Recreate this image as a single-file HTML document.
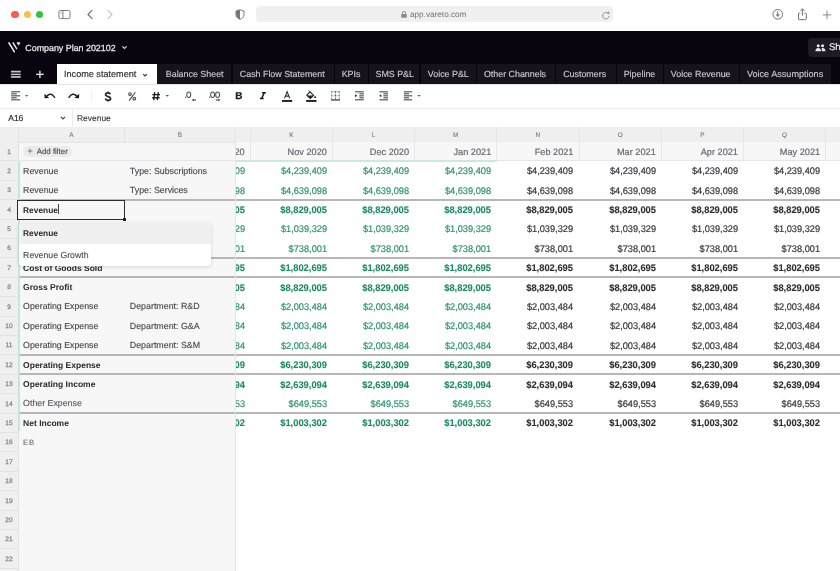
<!DOCTYPE html>
<html><head><meta charset="utf-8"><style>
html,body{margin:0;padding:0;width:840px;height:571px;overflow:hidden;background:#fff;}
body{position:relative;font-family:"Liberation Sans", sans-serif;}
#w{position:absolute;left:0;top:0;width:840px;height:571px;will-change:transform;text-rendering:geometricPrecision;}
.r{position:absolute;}
.t{position:absolute;white-space:nowrap;font-family:"Liberation Sans", sans-serif;}
</style></head><body><div id="w">
<div class="r" style="left:0.00px;top:0.00px;width:840.00px;height:30.50px;background:#fff;"></div>
<div class="r" style="left:11.30px;top:10.70px;width:7.40px;height:7.40px;background:#f95c57;border-radius:50%;"></div>
<div class="r" style="left:23.50px;top:10.70px;width:7.40px;height:7.40px;background:#f5c343;border-radius:50%;"></div>
<div class="r" style="left:35.60px;top:10.70px;width:7.40px;height:7.40px;background:#2bc842;border-radius:50%;"></div>
<svg class="r" style="left:57px;top:9px" width="15" height="11" viewBox="0 0 15 11"><rect x="1.9" y="1.5" width="11.1" height="8.1" rx="1.4" fill="none" stroke="#7e7e7e" stroke-width="1"/><line x1="5.9" y1="1.5" x2="5.9" y2="9.6" stroke="#7e7e7e" stroke-width="1"/><line x1="3.2" y1="3" x2="4.6" y2="3" stroke="#9a9a9a" stroke-width="0.6"/><line x1="3.2" y1="4.4" x2="4.6" y2="4.4" stroke="#9a9a9a" stroke-width="0.6"/></svg>
<svg class="r" style="left:85px;top:9px" width="10" height="11" viewBox="0 0 10 11"><polyline points="7,1.3 3,5.5 7,9.7" fill="none" stroke="#6e6e6e" stroke-width="1.1" stroke-linecap="round" stroke-linejoin="round"/></svg>
<svg class="r" style="left:105px;top:9px" width="10" height="11" viewBox="0 0 10 11"><polyline points="3,1.3 7,5.5 3,9.7" fill="none" stroke="#c4c4c4" stroke-width="1.1" stroke-linecap="round" stroke-linejoin="round"/></svg>
<svg class="r" style="left:235px;top:9px" width="10" height="11" viewBox="0 0 10 11"><path d="M5 0.8 L9 2 L9 5.6 C9 8 7 9.6 5 10.3 C3 9.6 1 8 1 5.6 L1 2 Z" fill="none" stroke="#777" stroke-width="1"/><path d="M5 0.8 L1 2 L1 5.6 C1 8 3 9.6 5 10.3 Z" fill="#777"/></svg>
<div class="r" style="left:255.70px;top:6.00px;width:357.00px;height:16.40px;background:#f0f0f1;border-radius:4px;"></div>
<svg class="r" style="left:401px;top:11px" width="6" height="7" viewBox="0 0 6 7"><rect x="0.3" y="3" width="5.4" height="3.8" rx="0.6" fill="#8a8a8a"/><path d="M1.4 3 V2 A1.6 1.6 0 0 1 4.6 2 V3" fill="none" stroke="#8a8a8a" stroke-width="0.9"/></svg>
<div class="t" style="left:410.00px;top:11.36px;font-size:8.2px;line-height:8.2px;color:#707070;font-weight:400;">app.vareto.com</div>
<svg class="r" style="left:601px;top:10.5px" width="10" height="9" viewBox="0 0 10 9"><path d="M7.6 3.2 A3.2 3.2 0 1 0 8 5" fill="none" stroke="#8a8a8a" stroke-width="0.9"/><path d="M6 1.2 L8.2 3.3 L8.4 0.6 Z" fill="#8a8a8a"/></svg>
<svg class="r" style="left:772px;top:9px" width="12" height="12" viewBox="0 0 12 12"><circle cx="5.8" cy="5.3" r="4.8" fill="none" stroke="#747474" stroke-width="1"/><line x1="5.8" y1="2.5" x2="5.8" y2="6.4" stroke="#747474" stroke-width="1"/><path d="M3.7 5.4 L7.9 5.4 L5.8 7.9 Z" fill="#747474"/></svg>
<svg class="r" style="left:797px;top:8px" width="11" height="13" viewBox="0 0 11 13"><path d="M3.4 5.2 H2.2 Q1.5 5.2 1.5 5.9 V11 Q1.5 11.7 2.2 11.7 H8.6 Q9.3 11.7 9.3 11 V5.9 Q9.3 5.2 8.6 5.2 H7.4" fill="none" stroke="#747474" stroke-width="1"/><line x1="5.4" y1="1.2" x2="5.4" y2="7.8" stroke="#747474" stroke-width="1"/><path d="M3.4 2.9 L5.4 0.7 L7.4 2.9" fill="none" stroke="#747474" stroke-width="1"/></svg>
<svg class="r" style="left:822px;top:9.5px" width="10" height="10" viewBox="0 0 10 10"><line x1="5" y1="0.6" x2="5" y2="9.2" stroke="#7a7a7a" stroke-width="0.9"/><line x1="0.8" y1="4.9" x2="9.2" y2="4.9" stroke="#7a7a7a" stroke-width="0.9"/></svg>
<div class="r" style="left:0.00px;top:30.80px;width:840.00px;height:53.00px;background:#09040d;"></div>
<svg class="r" style="left:4px;top:38px" width="20" height="16" viewBox="0 0 20 16"><line x1="4.9" y1="4.9" x2="10.3" y2="13.7" stroke="#ececec" stroke-width="1.6" stroke-linecap="round"/><line x1="9.2" y1="4.9" x2="12.6" y2="10.7" stroke="#e4e4e4" stroke-width="1.5" stroke-linecap="round"/><path d="M13 4.5 L16.1 4.8 L14.5 7.2 Z" fill="#e8e8e8" stroke="#e8e8e8" stroke-width="0.7" stroke-linejoin="round"/></svg>
<div class="t" style="left:25.30px;top:43.67px;font-size:8.9px;line-height:8.9px;color:#ebe9ed;font-weight:400;-webkit-text-stroke:0.25px #ebe9ed;">Company Plan 202102</div>
<svg class="r" style="left:121px;top:45px" width="7" height="5" viewBox="0 0 7 5"><polyline points="1.4,1.3 3.5,3.4 5.6,1.3" fill="none" stroke="#d8d8da" stroke-width="1.2"/></svg>
<div class="r" style="left:808.20px;top:37.90px;width:40.00px;height:19.20px;background:#1f1b24;border-radius:4px;"></div>
<svg class="r" style="left:815px;top:44px" width="11" height="8" viewBox="0 0 11 8"><circle cx="3.2" cy="1.7" r="1.5" fill="#e8e8e8"/><circle cx="7.6" cy="1.7" r="1.5" fill="#e8e8e8"/><path d="M0.4 7.2 C0.4 4.8 1.6 4 3.2 4 C4.8 4 6 4.8 6 7.2 Z" fill="#e8e8e8"/><path d="M6.6 4.2 C7 4 7.3 4 7.6 4 C9.2 4 10.4 4.8 10.4 7.2 L6.8 7.2 C6.8 6 6.8 5 6.6 4.2 Z" fill="#e8e8e8"/></svg>
<div class="t" style="left:828.90px;top:43.17px;font-size:9.6px;line-height:9.6px;color:#e8e8e8;font-weight:400;-webkit-text-stroke:0.2px #e8e8e8;">Sh</div>
<svg class="r" style="left:10px;top:70px" width="12" height="9" viewBox="0 0 12 9"><rect x="1" y="0.75" width="9.7" height="1.7" fill="#c4c4c6"/><rect x="1" y="3.65" width="9.7" height="1.5" fill="#c4c4c6"/><rect x="1" y="6.1" width="9.7" height="1.7" fill="#c4c4c6"/></svg>
<svg class="r" style="left:35px;top:70px" width="10" height="10" viewBox="0 0 10 10"><rect x="4.2" y="0.7" width="1.4" height="7.3" fill="#dcdcde"/><rect x="1.1" y="3.65" width="7.6" height="1.4" fill="#dcdcde"/></svg>
<div class="r" style="left:56.50px;top:64.20px;width:100.80px;height:20.00px;background:#fff;"></div>
<div class="t" style="left:64.00px;top:69.60px;font-size:9.1px;line-height:9.1px;color:#333;font-weight:400;-webkit-text-stroke:0.2px #333;">Income statement</div>
<svg class="r" style="left:142px;top:72.5px" width="6" height="4" viewBox="0 0 6 4"><polyline points="1.2,1.1 3.1,2.9 5,1.1" fill="none" stroke="#3a3a3a" stroke-width="1.2"/></svg>
<div class="r" style="left:157.30px;top:64.20px;width:74.20px;height:19.50px;background:#17121b;"></div>
<div class="t" style="left:165.80px;top:69.97px;font-size:8.9px;line-height:8.9px;color:#c9c6cc;font-weight:400;-webkit-text-stroke:0.15px #c9c6cc;">Balance Sheet</div>
<div class="r" style="left:232.50px;top:64.20px;width:101.50px;height:19.50px;background:#17121b;"></div>
<div class="t" style="left:239.80px;top:69.97px;font-size:8.9px;line-height:8.9px;color:#c9c6cc;font-weight:400;-webkit-text-stroke:0.15px #c9c6cc;">Cash Flow Statement</div>
<div class="r" style="left:335.00px;top:64.20px;width:32.90px;height:19.50px;background:#17121b;"></div>
<div class="t" style="left:341.70px;top:69.97px;font-size:8.9px;line-height:8.9px;color:#c9c6cc;font-weight:400;-webkit-text-stroke:0.15px #c9c6cc;">KPIs</div>
<div class="r" style="left:368.90px;top:64.20px;width:50.60px;height:19.50px;background:#17121b;"></div>
<div class="t" style="left:375.50px;top:69.97px;font-size:8.9px;line-height:8.9px;color:#c9c6cc;font-weight:400;-webkit-text-stroke:0.15px #c9c6cc;">SMS P&amp;L</div>
<div class="r" style="left:420.50px;top:64.20px;width:55.00px;height:19.50px;background:#17121b;"></div>
<div class="t" style="left:427.80px;top:69.97px;font-size:8.9px;line-height:8.9px;color:#c9c6cc;font-weight:400;-webkit-text-stroke:0.15px #c9c6cc;">Voice P&amp;L</div>
<div class="r" style="left:476.50px;top:64.20px;width:78.90px;height:19.50px;background:#17121b;"></div>
<div class="t" style="left:483.90px;top:69.97px;font-size:8.9px;line-height:8.9px;color:#c9c6cc;font-weight:400;-webkit-text-stroke:0.15px #c9c6cc;">Other Channels</div>
<div class="r" style="left:556.40px;top:64.20px;width:59.20px;height:19.50px;background:#17121b;"></div>
<div class="t" style="left:563.20px;top:69.97px;font-size:8.9px;line-height:8.9px;color:#c9c6cc;font-weight:400;-webkit-text-stroke:0.15px #c9c6cc;">Customers</div>
<div class="r" style="left:616.60px;top:64.20px;width:46.20px;height:19.50px;background:#17121b;"></div>
<div class="t" style="left:623.70px;top:69.97px;font-size:8.9px;line-height:8.9px;color:#c9c6cc;font-weight:400;-webkit-text-stroke:0.15px #c9c6cc;">Pipeline</div>
<div class="r" style="left:663.80px;top:64.20px;width:74.90px;height:19.50px;background:#17121b;"></div>
<div class="t" style="left:670.80px;top:69.97px;font-size:8.9px;line-height:8.9px;color:#c9c6cc;font-weight:400;-webkit-text-stroke:0.15px #c9c6cc;">Voice Revenue</div>
<div class="r" style="left:739.70px;top:64.20px;width:91.50px;height:19.50px;background:#17121b;"></div>
<div class="t" style="left:746.90px;top:69.80px;font-size:9.1px;line-height:9.1px;color:#c9c6cc;font-weight:400;-webkit-text-stroke:0.15px #c9c6cc;">Voice Assumptions</div>
<div class="r" style="left:0.00px;top:83.70px;width:840.00px;height:24.50px;background:#fff;"></div>
<div class="r" style="left:0.00px;top:83.80px;width:840.00px;height:0.90px;background:#e6e6e8;"></div>
<div class="r" style="left:0.00px;top:108.00px;width:840.00px;height:0.80px;background:#ebebeb;"></div>
<svg class="r" style="left:0;top:84px" width="430" height="24" viewBox="0 84 430 24">
<g fill="#7a7a7c">
<rect x="11.1" y="91" width="9.1" height="1.5"/><rect x="11.1" y="93" width="5.6" height="1.5"/><rect x="11.1" y="95" width="9.1" height="1.5"/><rect x="11.1" y="97" width="5.6" height="1.5"/><rect x="11.1" y="99" width="9.1" height="1.5"/>
</g>
<path d="M25 95 L28.2 95 L26.6 96.8 Z" fill="#555"/>
<!-- undo -->
<path d="M46.8 96 Q51 91.9 54.6 97.4" fill="none" stroke="#222" stroke-width="1.45" stroke-linecap="round"/>
<path d="M44.4 93.7 L44.6 98.3 L49.2 97.9 Z" fill="#1a1a1a"/>
<!-- redo -->
<path d="M76.8 96 Q72.6 91.9 69 97.4" fill="none" stroke="#222" stroke-width="1.45" stroke-linecap="round"/>
<path d="M79.2 93.7 L79 98.3 L74.4 97.9 Z" fill="#1a1a1a"/>
<!-- separator -->
<rect x="91.2" y="90.6" width="0.7" height="10.4" fill="#e6e6e6"/>
<!-- $ % # -->
<path d="M110.3 94.3 C110 93.2 109.2 92.8 108 92.8 C106.5 92.8 105.6 93.6 105.6 94.6 C105.6 97.3 110.6 95.9 110.6 98.5 C110.6 99.6 109.6 100.3 108 100.3 C106.6 100.3 105.6 99.7 105.3 98.6" fill="none" stroke="#262626" stroke-width="1.75"/>
<path d="M108 91.4 L108 93 M108 100 L108 101.5" stroke="#262626" stroke-width="1.4"/>
<circle cx="130" cy="94" r="1.35" fill="none" stroke="#444" stroke-width="1.05"/>
<circle cx="134.3" cy="98.7" r="1.35" fill="none" stroke="#444" stroke-width="1.05"/>
<path d="M135.3 92.2 L129.1 100.6" stroke="#444" stroke-width="1.05"/>
<path d="M154.7 92.1 L153.7 100.2 M158.3 92.1 L157.3 100.2 M152.4 94.6 L160 94.6 M152.2 97.7 L159.6 97.7" stroke="#1e1e1e" stroke-width="1.35"/>
<path d="M165.6 95 L169 95 L167.3 96.8 Z" fill="#555"/>
<!-- .0 <- -->
<rect x="184.9" y="96.6" width="1" height="1.2" fill="#555"/>
<ellipse cx="188.75" cy="94.65" rx="1.95" ry="2.75" fill="none" stroke="#505050" stroke-width="1.05"/>
<path d="M193.6 100 L196 100" stroke="#444" stroke-width="1.1"/><path d="M191.6 100 L193.8 98.7 L193.8 101.3 Z" fill="#333"/>
<!-- .00 -> -->
<rect x="209" y="96.6" width="1" height="1.2" fill="#555"/>
<ellipse cx="212.6" cy="94.65" rx="1.95" ry="2.75" fill="none" stroke="#505050" stroke-width="1.05"/>
<ellipse cx="217.6" cy="94.65" rx="1.95" ry="2.75" fill="none" stroke="#505050" stroke-width="1.05"/>
<path d="M215.8 100 L218.2 100" stroke="#444" stroke-width="1.1"/><path d="M220.4 100 L218.2 98.7 L218.2 101.3 Z" fill="#333"/>
<!-- B -->
<text x="238.9" y="99.2" font-family="Liberation Sans" font-weight="700" font-size="10" fill="#1e1e1e" stroke="#1e1e1e" stroke-width="0.25" text-anchor="middle">B</text>
<!-- I -->
<path d="M262 92.7 L265.9 92.7 M259.9 98.6 L263.7 98.6 M264.2 92.7 L261.6 98.6" fill="none" stroke="#1e1e1e" stroke-width="1.5"/>
<!-- A underline -->
<path d="M284.5 98.4 L287.1 91.6 L289.7 98.4 M285.5 96.1 L288.7 96.1" fill="none" stroke="#222" stroke-width="1.05"/>
<rect x="282" y="100" width="10.2" height="1.9" fill="#1e1e1e"/>
<!-- bucket -->
<path d="M310 91.8 L313.6 95.4 L310.2 98.4 L306.8 95.2 Z" fill="none" stroke="#1e1e1e" stroke-width="1.1"/>
<path d="M307.2 95.4 L313.2 95.4 L310.2 98.2 Z" fill="#1e1e1e"/>
<path d="M308.4 90.2 L310.4 92.2" stroke="#333" stroke-width="0.8"/>
<circle cx="315.1" cy="97.3" r="1" fill="#1e1e1e"/>
<rect x="306.1" y="100" width="10.4" height="1.9" fill="#1e1e1e"/>
<!-- borders -->
<g stroke="#9a9a9c" stroke-width="1.1" stroke-dasharray="2.3 0.9" fill="none">
<path d="M331 91.6 L340 91.6"/><path d="M331.6 91 L331.6 99.2"/><path d="M339.4 91 L339.4 99.2"/><path d="M331 95.8 L340 95.8"/>
</g>
<path d="M335.5 91 L335.5 99.2" stroke="#707072" stroke-width="1.1" stroke-dasharray="2.3 0.9"/>
<rect x="331" y="99.1" width="9" height="1.7" fill="#6e6e70"/>
<!-- indent -->
<g fill="#7a7a7c">
<rect x="355" y="91" width="8.8" height="1.5"/><rect x="359.4" y="93" width="4.4" height="1.5"/><rect x="359.4" y="95" width="4.4" height="1.5"/><rect x="359.4" y="97" width="4.4" height="1.5"/><rect x="355" y="99" width="8.8" height="1.5"/>
</g>
<path d="M355 94.3 L357.2 95.8 L355 97.3 Z" fill="#2a2a2a"/>
<!-- outdent -->
<g fill="#7a7a7c">
<rect x="379.4" y="91" width="8.6" height="1.5"/><rect x="383.4" y="93" width="4.6" height="1.5"/><rect x="383.4" y="95" width="4.6" height="1.5"/><rect x="383.4" y="97" width="4.6" height="1.5"/><rect x="379.4" y="99" width="8.6" height="1.5"/>
</g>
<path d="M381.4 94.3 L379.2 95.8 L381.4 97.3 Z" fill="#2a2a2a"/>
<!-- align -->
<g fill="#7a7a7c">
<rect x="403.8" y="91" width="8.3" height="1.5"/><rect x="403.8" y="93" width="5.3" height="1.5"/><rect x="403.8" y="95" width="8.3" height="1.5"/><rect x="403.8" y="97" width="5.3" height="1.5"/><rect x="403.8" y="99" width="8.3" height="1.5"/>
</g>
<path d="M417.4 95 L420.8 95 L419.1 96.8 Z" fill="#555"/>
</svg>

<div class="r" style="left:0.00px;top:108.80px;width:840.00px;height:18.20px;background:#fff;"></div>
<div class="t" style="left:8.30px;top:113.92px;font-size:8.6px;line-height:8.6px;color:#333;font-weight:400;-webkit-text-stroke:0.2px #333;letter-spacing:-0.1px;">A16</div>
<svg class="r" style="left:59.5px;top:116px" width="6" height="4" viewBox="0 0 6 4"><polyline points="0.9,0.9 3,2.9 5.1,0.9" fill="none" stroke="#444" stroke-width="1.15"/></svg>
<div class="r" style="left:71.60px;top:108.80px;width:0.80px;height:18.20px;background:#ececec;"></div>
<div class="t" style="left:77.00px;top:114.05px;font-size:8.45px;line-height:8.45px;color:#3d3d3f;font-weight:400;-webkit-text-stroke:0.15px #3d3d3f;">Revenue</div>
<div class="r" style="left:0.00px;top:127.00px;width:840.00px;height:444.00px;background:#fff;"></div>
<div class="r" style="left:18.00px;top:127.00px;width:217.20px;height:444.00px;background:#f7f7f7;"></div>
<div class="r" style="left:0.00px;top:127.00px;width:840.00px;height:15.30px;background:#efeff0;"></div>
<div class="r" style="left:0.00px;top:141.80px;width:840.00px;height:0.80px;background:#e3e3e5;"></div>
<div class="r" style="left:0.00px;top:127.00px;width:18.00px;height:444.00px;background:#efeff0;"></div>
<div class="r" style="left:17.80px;top:127.00px;width:0.80px;height:444.00px;background:#e2e2e4;"></div>
<div class="r" style="left:235.20px;top:142.30px;width:604.80px;height:18.40px;background:#f7f7f7;"></div>
<div class="r" style="left:18.00px;top:160.40px;width:822.00px;height:0.80px;background:#e6e6e8;"></div>
<div class="r" style="left:249.80px;top:127.00px;width:0.80px;height:33.70px;background:#e6e6e8;"></div>
<div class="r" style="left:332.00px;top:127.00px;width:0.80px;height:33.70px;background:#e6e6e8;"></div>
<div class="r" style="left:414.20px;top:127.00px;width:0.80px;height:33.70px;background:#e6e6e8;"></div>
<div class="r" style="left:496.40px;top:127.00px;width:0.80px;height:33.70px;background:#e6e6e8;"></div>
<div class="r" style="left:578.60px;top:127.00px;width:0.80px;height:33.70px;background:#e6e6e8;"></div>
<div class="r" style="left:660.90px;top:127.00px;width:0.80px;height:33.70px;background:#e6e6e8;"></div>
<div class="r" style="left:743.10px;top:127.00px;width:0.80px;height:33.70px;background:#e6e6e8;"></div>
<div class="r" style="left:825.30px;top:127.00px;width:0.80px;height:33.70px;background:#e6e6e8;"></div>
<div class="r" style="left:124.20px;top:127.00px;width:0.80px;height:15.30px;background:#e2e2e4;"></div>
<div class="r" style="left:235.20px;top:159.80px;width:261.60px;height:2.00px;background:#cbe9de;"></div>
<div class="t" style="left:-28.60px;width:200px;text-align:center;top:133.28px;font-size:6.4px;line-height:6.4px;color:#78787c;font-weight:400;-webkit-text-stroke:0.1px #78787c;">A</div>
<div class="t" style="left:80.00px;width:200px;text-align:center;top:133.28px;font-size:6.4px;line-height:6.4px;color:#78787c;font-weight:400;-webkit-text-stroke:0.1px #78787c;">B</div>
<div class="t" style="left:191.30px;width:200px;text-align:center;top:133.28px;font-size:6.4px;line-height:6.4px;color:#78787c;font-weight:400;-webkit-text-stroke:0.1px #78787c;">K</div>
<div class="t" style="left:273.50px;width:200px;text-align:center;top:133.28px;font-size:6.4px;line-height:6.4px;color:#78787c;font-weight:400;-webkit-text-stroke:0.1px #78787c;">L</div>
<div class="t" style="left:355.70px;width:200px;text-align:center;top:133.28px;font-size:6.4px;line-height:6.4px;color:#78787c;font-weight:400;-webkit-text-stroke:0.1px #78787c;">M</div>
<div class="t" style="left:437.90px;width:200px;text-align:center;top:133.28px;font-size:6.4px;line-height:6.4px;color:#78787c;font-weight:400;-webkit-text-stroke:0.1px #78787c;">N</div>
<div class="t" style="left:520.15px;width:200px;text-align:center;top:133.28px;font-size:6.4px;line-height:6.4px;color:#78787c;font-weight:400;-webkit-text-stroke:0.1px #78787c;">O</div>
<div class="t" style="left:602.40px;width:200px;text-align:center;top:133.28px;font-size:6.4px;line-height:6.4px;color:#78787c;font-weight:400;-webkit-text-stroke:0.1px #78787c;">P</div>
<div class="t" style="left:684.60px;width:200px;text-align:center;top:133.28px;font-size:6.4px;line-height:6.4px;color:#78787c;font-weight:400;-webkit-text-stroke:0.1px #78787c;">Q</div>
<div class="t" style="left:-91.00px;width:200px;text-align:center;top:149.81px;font-size:6.6px;line-height:6.6px;color:#848487;font-weight:400;-webkit-text-stroke:0.25px #848487;">1</div>
<div class="r" style="left:0.00px;top:160.30px;width:18.00px;height:0.80px;background:#e2e2e4;"></div>
<div class="t" style="left:-91.00px;width:200px;text-align:center;top:168.71px;font-size:6.6px;line-height:6.6px;color:#848487;font-weight:400;-webkit-text-stroke:0.25px #848487;">2</div>
<div class="r" style="left:0.00px;top:179.70px;width:18.00px;height:0.80px;background:#e2e2e4;"></div>
<div class="t" style="left:-91.00px;width:200px;text-align:center;top:188.11px;font-size:6.6px;line-height:6.6px;color:#848487;font-weight:400;-webkit-text-stroke:0.25px #848487;">3</div>
<div class="r" style="left:0.00px;top:199.10px;width:18.00px;height:0.80px;background:#e2e2e4;"></div>
<div class="t" style="left:-91.00px;width:200px;text-align:center;top:207.51px;font-size:6.6px;line-height:6.6px;color:#848487;font-weight:400;-webkit-text-stroke:0.25px #848487;">4</div>
<div class="r" style="left:0.00px;top:218.50px;width:18.00px;height:0.80px;background:#e2e2e4;"></div>
<div class="t" style="left:-91.00px;width:200px;text-align:center;top:226.91px;font-size:6.6px;line-height:6.6px;color:#848487;font-weight:400;-webkit-text-stroke:0.25px #848487;">5</div>
<div class="r" style="left:0.00px;top:237.90px;width:18.00px;height:0.80px;background:#e2e2e4;"></div>
<div class="t" style="left:-91.00px;width:200px;text-align:center;top:246.31px;font-size:6.6px;line-height:6.6px;color:#848487;font-weight:400;-webkit-text-stroke:0.25px #848487;">6</div>
<div class="r" style="left:0.00px;top:257.30px;width:18.00px;height:0.80px;background:#e2e2e4;"></div>
<div class="t" style="left:-91.00px;width:200px;text-align:center;top:265.71px;font-size:6.6px;line-height:6.6px;color:#848487;font-weight:400;-webkit-text-stroke:0.25px #848487;">7</div>
<div class="r" style="left:0.00px;top:276.70px;width:18.00px;height:0.80px;background:#e2e2e4;"></div>
<div class="t" style="left:-91.00px;width:200px;text-align:center;top:285.11px;font-size:6.6px;line-height:6.6px;color:#848487;font-weight:400;-webkit-text-stroke:0.25px #848487;">8</div>
<div class="r" style="left:0.00px;top:296.10px;width:18.00px;height:0.80px;background:#e2e2e4;"></div>
<div class="t" style="left:-91.00px;width:200px;text-align:center;top:304.51px;font-size:6.6px;line-height:6.6px;color:#848487;font-weight:400;-webkit-text-stroke:0.25px #848487;">9</div>
<div class="r" style="left:0.00px;top:315.50px;width:18.00px;height:0.80px;background:#e2e2e4;"></div>
<div class="t" style="left:-91.00px;width:200px;text-align:center;top:323.91px;font-size:6.6px;line-height:6.6px;color:#848487;font-weight:400;-webkit-text-stroke:0.25px #848487;">10</div>
<div class="r" style="left:0.00px;top:334.90px;width:18.00px;height:0.80px;background:#e2e2e4;"></div>
<div class="t" style="left:-91.00px;width:200px;text-align:center;top:343.31px;font-size:6.6px;line-height:6.6px;color:#848487;font-weight:400;-webkit-text-stroke:0.25px #848487;">11</div>
<div class="r" style="left:0.00px;top:354.30px;width:18.00px;height:0.80px;background:#e2e2e4;"></div>
<div class="t" style="left:-91.00px;width:200px;text-align:center;top:362.71px;font-size:6.6px;line-height:6.6px;color:#848487;font-weight:400;-webkit-text-stroke:0.25px #848487;">12</div>
<div class="r" style="left:0.00px;top:373.70px;width:18.00px;height:0.80px;background:#e2e2e4;"></div>
<div class="t" style="left:-91.00px;width:200px;text-align:center;top:382.11px;font-size:6.6px;line-height:6.6px;color:#848487;font-weight:400;-webkit-text-stroke:0.25px #848487;">13</div>
<div class="r" style="left:0.00px;top:393.10px;width:18.00px;height:0.80px;background:#e2e2e4;"></div>
<div class="t" style="left:-91.00px;width:200px;text-align:center;top:401.51px;font-size:6.6px;line-height:6.6px;color:#848487;font-weight:400;-webkit-text-stroke:0.25px #848487;">14</div>
<div class="r" style="left:0.00px;top:412.50px;width:18.00px;height:0.80px;background:#e2e2e4;"></div>
<div class="t" style="left:-91.00px;width:200px;text-align:center;top:420.91px;font-size:6.6px;line-height:6.6px;color:#848487;font-weight:400;-webkit-text-stroke:0.25px #848487;">15</div>
<div class="r" style="left:0.00px;top:431.90px;width:18.00px;height:0.80px;background:#e2e2e4;"></div>
<div class="t" style="left:-91.00px;width:200px;text-align:center;top:440.31px;font-size:6.6px;line-height:6.6px;color:#848487;font-weight:400;-webkit-text-stroke:0.25px #848487;">16</div>
<div class="r" style="left:0.00px;top:451.30px;width:18.00px;height:0.80px;background:#e2e2e4;"></div>
<div class="t" style="left:-91.00px;width:200px;text-align:center;top:459.71px;font-size:6.6px;line-height:6.6px;color:#848487;font-weight:400;-webkit-text-stroke:0.25px #848487;">17</div>
<div class="r" style="left:0.00px;top:470.70px;width:18.00px;height:0.80px;background:#e2e2e4;"></div>
<div class="t" style="left:-91.00px;width:200px;text-align:center;top:479.11px;font-size:6.6px;line-height:6.6px;color:#848487;font-weight:400;-webkit-text-stroke:0.25px #848487;">18</div>
<div class="r" style="left:0.00px;top:490.10px;width:18.00px;height:0.80px;background:#e2e2e4;"></div>
<div class="t" style="left:-91.00px;width:200px;text-align:center;top:498.51px;font-size:6.6px;line-height:6.6px;color:#848487;font-weight:400;-webkit-text-stroke:0.25px #848487;">19</div>
<div class="r" style="left:0.00px;top:509.50px;width:18.00px;height:0.80px;background:#e2e2e4;"></div>
<div class="t" style="left:-91.00px;width:200px;text-align:center;top:517.91px;font-size:6.6px;line-height:6.6px;color:#848487;font-weight:400;-webkit-text-stroke:0.25px #848487;">20</div>
<div class="r" style="left:0.00px;top:528.90px;width:18.00px;height:0.80px;background:#e2e2e4;"></div>
<div class="t" style="left:-91.00px;width:200px;text-align:center;top:537.31px;font-size:6.6px;line-height:6.6px;color:#848487;font-weight:400;-webkit-text-stroke:0.25px #848487;">21</div>
<div class="r" style="left:0.00px;top:548.30px;width:18.00px;height:0.80px;background:#e2e2e4;"></div>
<div class="t" style="left:-91.00px;width:200px;text-align:center;top:556.71px;font-size:6.6px;line-height:6.6px;color:#848487;font-weight:400;-webkit-text-stroke:0.25px #848487;">22</div>
<div class="r" style="left:0.00px;top:567.70px;width:18.00px;height:0.80px;background:#e2e2e4;"></div>
<div class="r" style="left:235.2px;top:142.3px;width:604.8px;height:18.4px;overflow:hidden;">
<div class="t" style="right:595.30px;top:6.01px;font-size:9.2px;line-height:9.2px;color:#6a686d;font-weight:400;-webkit-text-stroke:0.2px #6a686d;">Oct 2020</div>
<div class="t" style="right:513.10px;top:6.01px;font-size:9.2px;line-height:9.2px;color:#6a686d;font-weight:400;-webkit-text-stroke:0.2px #6a686d;">Nov 2020</div>
<div class="t" style="right:430.90px;top:6.01px;font-size:9.2px;line-height:9.2px;color:#6a686d;font-weight:400;-webkit-text-stroke:0.2px #6a686d;">Dec 2020</div>
<div class="t" style="right:348.70px;top:6.01px;font-size:9.2px;line-height:9.2px;color:#6a686d;font-weight:400;-webkit-text-stroke:0.2px #6a686d;">Jan 2021</div>
<div class="t" style="right:266.50px;top:6.01px;font-size:9.2px;line-height:9.2px;color:#6a686d;font-weight:400;-webkit-text-stroke:0.2px #6a686d;">Feb 2021</div>
<div class="t" style="right:184.20px;top:6.01px;font-size:9.2px;line-height:9.2px;color:#6a686d;font-weight:400;-webkit-text-stroke:0.2px #6a686d;">Mar 2021</div>
<div class="t" style="right:102.00px;top:6.01px;font-size:9.2px;line-height:9.2px;color:#6a686d;font-weight:400;-webkit-text-stroke:0.2px #6a686d;">Apr 2021</div>
<div class="t" style="right:19.80px;top:6.01px;font-size:9.2px;line-height:9.2px;color:#6a686d;font-weight:400;-webkit-text-stroke:0.2px #6a686d;">May 2021</div>
</div>
<div class="r" style="left:22.90px;top:146.00px;width:49.50px;height:11.40px;background:#ebebec;border-radius:6px;"></div>
<svg class="r" style="left:26.5px;top:148.3px" width="6" height="6" viewBox="0 0 6 6"><rect x="2.68" y="0.6" width="0.64" height="4.8" fill="#555"/><rect x="0.6" y="2.68" width="4.8" height="0.64" fill="#555"/></svg>
<div class="t" style="left:36.70px;top:147.51px;font-size:7.9px;line-height:7.9px;color:#505052;font-weight:400;-webkit-text-stroke:0.15px #505052;">Add filter</div>
<div class="r" style="left:235.2px;top:160.7px;width:604.8px;height:410.3px;overflow:hidden;">
<div class="t" style="right:595.30px;top:6.57px;font-size:9.6px;line-height:9.6px;color:#2f9573;font-weight:400;transform:scaleX(0.96);transform-origin:100% 50%;-webkit-text-stroke:0.22px #2f9573;">$4,239,409</div>
<div class="t" style="right:513.10px;top:6.57px;font-size:9.6px;line-height:9.6px;color:#2f9573;font-weight:400;transform:scaleX(0.96);transform-origin:100% 50%;-webkit-text-stroke:0.22px #2f9573;">$4,239,409</div>
<div class="t" style="right:430.90px;top:6.57px;font-size:9.6px;line-height:9.6px;color:#2f9573;font-weight:400;transform:scaleX(0.96);transform-origin:100% 50%;-webkit-text-stroke:0.22px #2f9573;">$4,239,409</div>
<div class="t" style="right:348.70px;top:6.57px;font-size:9.6px;line-height:9.6px;color:#2f9573;font-weight:400;transform:scaleX(0.96);transform-origin:100% 50%;-webkit-text-stroke:0.22px #2f9573;">$4,239,409</div>
<div class="t" style="right:266.50px;top:6.57px;font-size:9.6px;line-height:9.6px;color:#3a3a3d;font-weight:400;transform:scaleX(0.96);transform-origin:100% 50%;-webkit-text-stroke:0.22px #3a3a3d;">$4,239,409</div>
<div class="t" style="right:184.20px;top:6.57px;font-size:9.6px;line-height:9.6px;color:#3a3a3d;font-weight:400;transform:scaleX(0.96);transform-origin:100% 50%;-webkit-text-stroke:0.22px #3a3a3d;">$4,239,409</div>
<div class="t" style="right:102.00px;top:6.57px;font-size:9.6px;line-height:9.6px;color:#3a3a3d;font-weight:400;transform:scaleX(0.96);transform-origin:100% 50%;-webkit-text-stroke:0.22px #3a3a3d;">$4,239,409</div>
<div class="t" style="right:19.80px;top:6.57px;font-size:9.6px;line-height:9.6px;color:#3a3a3d;font-weight:400;transform:scaleX(0.96);transform-origin:100% 50%;-webkit-text-stroke:0.22px #3a3a3d;">$4,239,409</div>
<div class="t" style="right:595.30px;top:25.97px;font-size:9.6px;line-height:9.6px;color:#2f9573;font-weight:400;transform:scaleX(0.96);transform-origin:100% 50%;-webkit-text-stroke:0.22px #2f9573;">$4,639,098</div>
<div class="t" style="right:513.10px;top:25.97px;font-size:9.6px;line-height:9.6px;color:#2f9573;font-weight:400;transform:scaleX(0.96);transform-origin:100% 50%;-webkit-text-stroke:0.22px #2f9573;">$4,639,098</div>
<div class="t" style="right:430.90px;top:25.97px;font-size:9.6px;line-height:9.6px;color:#2f9573;font-weight:400;transform:scaleX(0.96);transform-origin:100% 50%;-webkit-text-stroke:0.22px #2f9573;">$4,639,098</div>
<div class="t" style="right:348.70px;top:25.97px;font-size:9.6px;line-height:9.6px;color:#2f9573;font-weight:400;transform:scaleX(0.96);transform-origin:100% 50%;-webkit-text-stroke:0.22px #2f9573;">$4,639,098</div>
<div class="t" style="right:266.50px;top:25.97px;font-size:9.6px;line-height:9.6px;color:#3a3a3d;font-weight:400;transform:scaleX(0.96);transform-origin:100% 50%;-webkit-text-stroke:0.22px #3a3a3d;">$4,639,098</div>
<div class="t" style="right:184.20px;top:25.97px;font-size:9.6px;line-height:9.6px;color:#3a3a3d;font-weight:400;transform:scaleX(0.96);transform-origin:100% 50%;-webkit-text-stroke:0.22px #3a3a3d;">$4,639,098</div>
<div class="t" style="right:102.00px;top:25.97px;font-size:9.6px;line-height:9.6px;color:#3a3a3d;font-weight:400;transform:scaleX(0.96);transform-origin:100% 50%;-webkit-text-stroke:0.22px #3a3a3d;">$4,639,098</div>
<div class="t" style="right:19.80px;top:25.97px;font-size:9.6px;line-height:9.6px;color:#3a3a3d;font-weight:400;transform:scaleX(0.96);transform-origin:100% 50%;-webkit-text-stroke:0.22px #3a3a3d;">$4,639,098</div>
<div class="t" style="right:595.30px;top:45.37px;font-size:9.6px;line-height:9.6px;color:#1d8a66;font-weight:700;transform:scaleX(0.975);transform-origin:100% 50%;-webkit-text-stroke:0.1px #1d8a66;">$8,829,005</div>
<div class="t" style="right:513.10px;top:45.37px;font-size:9.6px;line-height:9.6px;color:#1d8a66;font-weight:700;transform:scaleX(0.975);transform-origin:100% 50%;-webkit-text-stroke:0.1px #1d8a66;">$8,829,005</div>
<div class="t" style="right:430.90px;top:45.37px;font-size:9.6px;line-height:9.6px;color:#1d8a66;font-weight:700;transform:scaleX(0.975);transform-origin:100% 50%;-webkit-text-stroke:0.1px #1d8a66;">$8,829,005</div>
<div class="t" style="right:348.70px;top:45.37px;font-size:9.6px;line-height:9.6px;color:#1d8a66;font-weight:700;transform:scaleX(0.975);transform-origin:100% 50%;-webkit-text-stroke:0.1px #1d8a66;">$8,829,005</div>
<div class="t" style="right:266.50px;top:45.37px;font-size:9.6px;line-height:9.6px;color:#2e2e30;font-weight:700;transform:scaleX(0.975);transform-origin:100% 50%;-webkit-text-stroke:0.1px #2e2e30;">$8,829,005</div>
<div class="t" style="right:184.20px;top:45.37px;font-size:9.6px;line-height:9.6px;color:#2e2e30;font-weight:700;transform:scaleX(0.975);transform-origin:100% 50%;-webkit-text-stroke:0.1px #2e2e30;">$8,829,005</div>
<div class="t" style="right:102.00px;top:45.37px;font-size:9.6px;line-height:9.6px;color:#2e2e30;font-weight:700;transform:scaleX(0.975);transform-origin:100% 50%;-webkit-text-stroke:0.1px #2e2e30;">$8,829,005</div>
<div class="t" style="right:19.80px;top:45.37px;font-size:9.6px;line-height:9.6px;color:#2e2e30;font-weight:700;transform:scaleX(0.975);transform-origin:100% 50%;-webkit-text-stroke:0.1px #2e2e30;">$8,829,005</div>
<div class="t" style="right:595.30px;top:64.77px;font-size:9.6px;line-height:9.6px;color:#2f9573;font-weight:400;transform:scaleX(0.96);transform-origin:100% 50%;-webkit-text-stroke:0.22px #2f9573;">$1,039,329</div>
<div class="t" style="right:513.10px;top:64.77px;font-size:9.6px;line-height:9.6px;color:#2f9573;font-weight:400;transform:scaleX(0.96);transform-origin:100% 50%;-webkit-text-stroke:0.22px #2f9573;">$1,039,329</div>
<div class="t" style="right:430.90px;top:64.77px;font-size:9.6px;line-height:9.6px;color:#2f9573;font-weight:400;transform:scaleX(0.96);transform-origin:100% 50%;-webkit-text-stroke:0.22px #2f9573;">$1,039,329</div>
<div class="t" style="right:348.70px;top:64.77px;font-size:9.6px;line-height:9.6px;color:#2f9573;font-weight:400;transform:scaleX(0.96);transform-origin:100% 50%;-webkit-text-stroke:0.22px #2f9573;">$1,039,329</div>
<div class="t" style="right:266.50px;top:64.77px;font-size:9.6px;line-height:9.6px;color:#3a3a3d;font-weight:400;transform:scaleX(0.96);transform-origin:100% 50%;-webkit-text-stroke:0.22px #3a3a3d;">$1,039,329</div>
<div class="t" style="right:184.20px;top:64.77px;font-size:9.6px;line-height:9.6px;color:#3a3a3d;font-weight:400;transform:scaleX(0.96);transform-origin:100% 50%;-webkit-text-stroke:0.22px #3a3a3d;">$1,039,329</div>
<div class="t" style="right:102.00px;top:64.77px;font-size:9.6px;line-height:9.6px;color:#3a3a3d;font-weight:400;transform:scaleX(0.96);transform-origin:100% 50%;-webkit-text-stroke:0.22px #3a3a3d;">$1,039,329</div>
<div class="t" style="right:19.80px;top:64.77px;font-size:9.6px;line-height:9.6px;color:#3a3a3d;font-weight:400;transform:scaleX(0.96);transform-origin:100% 50%;-webkit-text-stroke:0.22px #3a3a3d;">$1,039,329</div>
<div class="t" style="right:595.30px;top:84.17px;font-size:9.6px;line-height:9.6px;color:#2f9573;font-weight:400;transform:scaleX(0.96);transform-origin:100% 50%;-webkit-text-stroke:0.22px #2f9573;">$738,001</div>
<div class="t" style="right:513.10px;top:84.17px;font-size:9.6px;line-height:9.6px;color:#2f9573;font-weight:400;transform:scaleX(0.96);transform-origin:100% 50%;-webkit-text-stroke:0.22px #2f9573;">$738,001</div>
<div class="t" style="right:430.90px;top:84.17px;font-size:9.6px;line-height:9.6px;color:#2f9573;font-weight:400;transform:scaleX(0.96);transform-origin:100% 50%;-webkit-text-stroke:0.22px #2f9573;">$738,001</div>
<div class="t" style="right:348.70px;top:84.17px;font-size:9.6px;line-height:9.6px;color:#2f9573;font-weight:400;transform:scaleX(0.96);transform-origin:100% 50%;-webkit-text-stroke:0.22px #2f9573;">$738,001</div>
<div class="t" style="right:266.50px;top:84.17px;font-size:9.6px;line-height:9.6px;color:#3a3a3d;font-weight:400;transform:scaleX(0.96);transform-origin:100% 50%;-webkit-text-stroke:0.22px #3a3a3d;">$738,001</div>
<div class="t" style="right:184.20px;top:84.17px;font-size:9.6px;line-height:9.6px;color:#3a3a3d;font-weight:400;transform:scaleX(0.96);transform-origin:100% 50%;-webkit-text-stroke:0.22px #3a3a3d;">$738,001</div>
<div class="t" style="right:102.00px;top:84.17px;font-size:9.6px;line-height:9.6px;color:#3a3a3d;font-weight:400;transform:scaleX(0.96);transform-origin:100% 50%;-webkit-text-stroke:0.22px #3a3a3d;">$738,001</div>
<div class="t" style="right:19.80px;top:84.17px;font-size:9.6px;line-height:9.6px;color:#3a3a3d;font-weight:400;transform:scaleX(0.96);transform-origin:100% 50%;-webkit-text-stroke:0.22px #3a3a3d;">$738,001</div>
<div class="t" style="right:595.30px;top:103.57px;font-size:9.6px;line-height:9.6px;color:#1d8a66;font-weight:700;transform:scaleX(0.975);transform-origin:100% 50%;-webkit-text-stroke:0.1px #1d8a66;">$1,802,695</div>
<div class="t" style="right:513.10px;top:103.57px;font-size:9.6px;line-height:9.6px;color:#1d8a66;font-weight:700;transform:scaleX(0.975);transform-origin:100% 50%;-webkit-text-stroke:0.1px #1d8a66;">$1,802,695</div>
<div class="t" style="right:430.90px;top:103.57px;font-size:9.6px;line-height:9.6px;color:#1d8a66;font-weight:700;transform:scaleX(0.975);transform-origin:100% 50%;-webkit-text-stroke:0.1px #1d8a66;">$1,802,695</div>
<div class="t" style="right:348.70px;top:103.57px;font-size:9.6px;line-height:9.6px;color:#1d8a66;font-weight:700;transform:scaleX(0.975);transform-origin:100% 50%;-webkit-text-stroke:0.1px #1d8a66;">$1,802,695</div>
<div class="t" style="right:266.50px;top:103.57px;font-size:9.6px;line-height:9.6px;color:#2e2e30;font-weight:700;transform:scaleX(0.975);transform-origin:100% 50%;-webkit-text-stroke:0.1px #2e2e30;">$1,802,695</div>
<div class="t" style="right:184.20px;top:103.57px;font-size:9.6px;line-height:9.6px;color:#2e2e30;font-weight:700;transform:scaleX(0.975);transform-origin:100% 50%;-webkit-text-stroke:0.1px #2e2e30;">$1,802,695</div>
<div class="t" style="right:102.00px;top:103.57px;font-size:9.6px;line-height:9.6px;color:#2e2e30;font-weight:700;transform:scaleX(0.975);transform-origin:100% 50%;-webkit-text-stroke:0.1px #2e2e30;">$1,802,695</div>
<div class="t" style="right:19.80px;top:103.57px;font-size:9.6px;line-height:9.6px;color:#2e2e30;font-weight:700;transform:scaleX(0.975);transform-origin:100% 50%;-webkit-text-stroke:0.1px #2e2e30;">$1,802,695</div>
<div class="t" style="right:595.30px;top:122.97px;font-size:9.6px;line-height:9.6px;color:#1d8a66;font-weight:700;transform:scaleX(0.975);transform-origin:100% 50%;-webkit-text-stroke:0.1px #1d8a66;">$8,829,005</div>
<div class="t" style="right:513.10px;top:122.97px;font-size:9.6px;line-height:9.6px;color:#1d8a66;font-weight:700;transform:scaleX(0.975);transform-origin:100% 50%;-webkit-text-stroke:0.1px #1d8a66;">$8,829,005</div>
<div class="t" style="right:430.90px;top:122.97px;font-size:9.6px;line-height:9.6px;color:#1d8a66;font-weight:700;transform:scaleX(0.975);transform-origin:100% 50%;-webkit-text-stroke:0.1px #1d8a66;">$8,829,005</div>
<div class="t" style="right:348.70px;top:122.97px;font-size:9.6px;line-height:9.6px;color:#1d8a66;font-weight:700;transform:scaleX(0.975);transform-origin:100% 50%;-webkit-text-stroke:0.1px #1d8a66;">$8,829,005</div>
<div class="t" style="right:266.50px;top:122.97px;font-size:9.6px;line-height:9.6px;color:#2e2e30;font-weight:700;transform:scaleX(0.975);transform-origin:100% 50%;-webkit-text-stroke:0.1px #2e2e30;">$8,829,005</div>
<div class="t" style="right:184.20px;top:122.97px;font-size:9.6px;line-height:9.6px;color:#2e2e30;font-weight:700;transform:scaleX(0.975);transform-origin:100% 50%;-webkit-text-stroke:0.1px #2e2e30;">$8,829,005</div>
<div class="t" style="right:102.00px;top:122.97px;font-size:9.6px;line-height:9.6px;color:#2e2e30;font-weight:700;transform:scaleX(0.975);transform-origin:100% 50%;-webkit-text-stroke:0.1px #2e2e30;">$8,829,005</div>
<div class="t" style="right:19.80px;top:122.97px;font-size:9.6px;line-height:9.6px;color:#2e2e30;font-weight:700;transform:scaleX(0.975);transform-origin:100% 50%;-webkit-text-stroke:0.1px #2e2e30;">$8,829,005</div>
<div class="t" style="right:595.30px;top:142.37px;font-size:9.6px;line-height:9.6px;color:#2f9573;font-weight:400;transform:scaleX(0.96);transform-origin:100% 50%;-webkit-text-stroke:0.22px #2f9573;">$2,003,484</div>
<div class="t" style="right:513.10px;top:142.37px;font-size:9.6px;line-height:9.6px;color:#2f9573;font-weight:400;transform:scaleX(0.96);transform-origin:100% 50%;-webkit-text-stroke:0.22px #2f9573;">$2,003,484</div>
<div class="t" style="right:430.90px;top:142.37px;font-size:9.6px;line-height:9.6px;color:#2f9573;font-weight:400;transform:scaleX(0.96);transform-origin:100% 50%;-webkit-text-stroke:0.22px #2f9573;">$2,003,484</div>
<div class="t" style="right:348.70px;top:142.37px;font-size:9.6px;line-height:9.6px;color:#2f9573;font-weight:400;transform:scaleX(0.96);transform-origin:100% 50%;-webkit-text-stroke:0.22px #2f9573;">$2,003,484</div>
<div class="t" style="right:266.50px;top:142.37px;font-size:9.6px;line-height:9.6px;color:#3a3a3d;font-weight:400;transform:scaleX(0.96);transform-origin:100% 50%;-webkit-text-stroke:0.22px #3a3a3d;">$2,003,484</div>
<div class="t" style="right:184.20px;top:142.37px;font-size:9.6px;line-height:9.6px;color:#3a3a3d;font-weight:400;transform:scaleX(0.96);transform-origin:100% 50%;-webkit-text-stroke:0.22px #3a3a3d;">$2,003,484</div>
<div class="t" style="right:102.00px;top:142.37px;font-size:9.6px;line-height:9.6px;color:#3a3a3d;font-weight:400;transform:scaleX(0.96);transform-origin:100% 50%;-webkit-text-stroke:0.22px #3a3a3d;">$2,003,484</div>
<div class="t" style="right:19.80px;top:142.37px;font-size:9.6px;line-height:9.6px;color:#3a3a3d;font-weight:400;transform:scaleX(0.96);transform-origin:100% 50%;-webkit-text-stroke:0.22px #3a3a3d;">$2,003,484</div>
<div class="t" style="right:595.30px;top:161.77px;font-size:9.6px;line-height:9.6px;color:#2f9573;font-weight:400;transform:scaleX(0.96);transform-origin:100% 50%;-webkit-text-stroke:0.22px #2f9573;">$2,003,484</div>
<div class="t" style="right:513.10px;top:161.77px;font-size:9.6px;line-height:9.6px;color:#2f9573;font-weight:400;transform:scaleX(0.96);transform-origin:100% 50%;-webkit-text-stroke:0.22px #2f9573;">$2,003,484</div>
<div class="t" style="right:430.90px;top:161.77px;font-size:9.6px;line-height:9.6px;color:#2f9573;font-weight:400;transform:scaleX(0.96);transform-origin:100% 50%;-webkit-text-stroke:0.22px #2f9573;">$2,003,484</div>
<div class="t" style="right:348.70px;top:161.77px;font-size:9.6px;line-height:9.6px;color:#2f9573;font-weight:400;transform:scaleX(0.96);transform-origin:100% 50%;-webkit-text-stroke:0.22px #2f9573;">$2,003,484</div>
<div class="t" style="right:266.50px;top:161.77px;font-size:9.6px;line-height:9.6px;color:#3a3a3d;font-weight:400;transform:scaleX(0.96);transform-origin:100% 50%;-webkit-text-stroke:0.22px #3a3a3d;">$2,003,484</div>
<div class="t" style="right:184.20px;top:161.77px;font-size:9.6px;line-height:9.6px;color:#3a3a3d;font-weight:400;transform:scaleX(0.96);transform-origin:100% 50%;-webkit-text-stroke:0.22px #3a3a3d;">$2,003,484</div>
<div class="t" style="right:102.00px;top:161.77px;font-size:9.6px;line-height:9.6px;color:#3a3a3d;font-weight:400;transform:scaleX(0.96);transform-origin:100% 50%;-webkit-text-stroke:0.22px #3a3a3d;">$2,003,484</div>
<div class="t" style="right:19.80px;top:161.77px;font-size:9.6px;line-height:9.6px;color:#3a3a3d;font-weight:400;transform:scaleX(0.96);transform-origin:100% 50%;-webkit-text-stroke:0.22px #3a3a3d;">$2,003,484</div>
<div class="t" style="right:595.30px;top:181.17px;font-size:9.6px;line-height:9.6px;color:#2f9573;font-weight:400;transform:scaleX(0.96);transform-origin:100% 50%;-webkit-text-stroke:0.22px #2f9573;">$2,003,484</div>
<div class="t" style="right:513.10px;top:181.17px;font-size:9.6px;line-height:9.6px;color:#2f9573;font-weight:400;transform:scaleX(0.96);transform-origin:100% 50%;-webkit-text-stroke:0.22px #2f9573;">$2,003,484</div>
<div class="t" style="right:430.90px;top:181.17px;font-size:9.6px;line-height:9.6px;color:#2f9573;font-weight:400;transform:scaleX(0.96);transform-origin:100% 50%;-webkit-text-stroke:0.22px #2f9573;">$2,003,484</div>
<div class="t" style="right:348.70px;top:181.17px;font-size:9.6px;line-height:9.6px;color:#2f9573;font-weight:400;transform:scaleX(0.96);transform-origin:100% 50%;-webkit-text-stroke:0.22px #2f9573;">$2,003,484</div>
<div class="t" style="right:266.50px;top:181.17px;font-size:9.6px;line-height:9.6px;color:#3a3a3d;font-weight:400;transform:scaleX(0.96);transform-origin:100% 50%;-webkit-text-stroke:0.22px #3a3a3d;">$2,003,484</div>
<div class="t" style="right:184.20px;top:181.17px;font-size:9.6px;line-height:9.6px;color:#3a3a3d;font-weight:400;transform:scaleX(0.96);transform-origin:100% 50%;-webkit-text-stroke:0.22px #3a3a3d;">$2,003,484</div>
<div class="t" style="right:102.00px;top:181.17px;font-size:9.6px;line-height:9.6px;color:#3a3a3d;font-weight:400;transform:scaleX(0.96);transform-origin:100% 50%;-webkit-text-stroke:0.22px #3a3a3d;">$2,003,484</div>
<div class="t" style="right:19.80px;top:181.17px;font-size:9.6px;line-height:9.6px;color:#3a3a3d;font-weight:400;transform:scaleX(0.96);transform-origin:100% 50%;-webkit-text-stroke:0.22px #3a3a3d;">$2,003,484</div>
<div class="t" style="right:595.30px;top:200.57px;font-size:9.6px;line-height:9.6px;color:#1d8a66;font-weight:700;transform:scaleX(0.975);transform-origin:100% 50%;-webkit-text-stroke:0.1px #1d8a66;">$6,230,309</div>
<div class="t" style="right:513.10px;top:200.57px;font-size:9.6px;line-height:9.6px;color:#1d8a66;font-weight:700;transform:scaleX(0.975);transform-origin:100% 50%;-webkit-text-stroke:0.1px #1d8a66;">$6,230,309</div>
<div class="t" style="right:430.90px;top:200.57px;font-size:9.6px;line-height:9.6px;color:#1d8a66;font-weight:700;transform:scaleX(0.975);transform-origin:100% 50%;-webkit-text-stroke:0.1px #1d8a66;">$6,230,309</div>
<div class="t" style="right:348.70px;top:200.57px;font-size:9.6px;line-height:9.6px;color:#1d8a66;font-weight:700;transform:scaleX(0.975);transform-origin:100% 50%;-webkit-text-stroke:0.1px #1d8a66;">$6,230,309</div>
<div class="t" style="right:266.50px;top:200.57px;font-size:9.6px;line-height:9.6px;color:#2e2e30;font-weight:700;transform:scaleX(0.975);transform-origin:100% 50%;-webkit-text-stroke:0.1px #2e2e30;">$6,230,309</div>
<div class="t" style="right:184.20px;top:200.57px;font-size:9.6px;line-height:9.6px;color:#2e2e30;font-weight:700;transform:scaleX(0.975);transform-origin:100% 50%;-webkit-text-stroke:0.1px #2e2e30;">$6,230,309</div>
<div class="t" style="right:102.00px;top:200.57px;font-size:9.6px;line-height:9.6px;color:#2e2e30;font-weight:700;transform:scaleX(0.975);transform-origin:100% 50%;-webkit-text-stroke:0.1px #2e2e30;">$6,230,309</div>
<div class="t" style="right:19.80px;top:200.57px;font-size:9.6px;line-height:9.6px;color:#2e2e30;font-weight:700;transform:scaleX(0.975);transform-origin:100% 50%;-webkit-text-stroke:0.1px #2e2e30;">$6,230,309</div>
<div class="t" style="right:595.30px;top:219.97px;font-size:9.6px;line-height:9.6px;color:#1d8a66;font-weight:700;transform:scaleX(0.975);transform-origin:100% 50%;-webkit-text-stroke:0.1px #1d8a66;">$2,639,094</div>
<div class="t" style="right:513.10px;top:219.97px;font-size:9.6px;line-height:9.6px;color:#1d8a66;font-weight:700;transform:scaleX(0.975);transform-origin:100% 50%;-webkit-text-stroke:0.1px #1d8a66;">$2,639,094</div>
<div class="t" style="right:430.90px;top:219.97px;font-size:9.6px;line-height:9.6px;color:#1d8a66;font-weight:700;transform:scaleX(0.975);transform-origin:100% 50%;-webkit-text-stroke:0.1px #1d8a66;">$2,639,094</div>
<div class="t" style="right:348.70px;top:219.97px;font-size:9.6px;line-height:9.6px;color:#1d8a66;font-weight:700;transform:scaleX(0.975);transform-origin:100% 50%;-webkit-text-stroke:0.1px #1d8a66;">$2,639,094</div>
<div class="t" style="right:266.50px;top:219.97px;font-size:9.6px;line-height:9.6px;color:#2e2e30;font-weight:700;transform:scaleX(0.975);transform-origin:100% 50%;-webkit-text-stroke:0.1px #2e2e30;">$2,639,094</div>
<div class="t" style="right:184.20px;top:219.97px;font-size:9.6px;line-height:9.6px;color:#2e2e30;font-weight:700;transform:scaleX(0.975);transform-origin:100% 50%;-webkit-text-stroke:0.1px #2e2e30;">$2,639,094</div>
<div class="t" style="right:102.00px;top:219.97px;font-size:9.6px;line-height:9.6px;color:#2e2e30;font-weight:700;transform:scaleX(0.975);transform-origin:100% 50%;-webkit-text-stroke:0.1px #2e2e30;">$2,639,094</div>
<div class="t" style="right:19.80px;top:219.97px;font-size:9.6px;line-height:9.6px;color:#2e2e30;font-weight:700;transform:scaleX(0.975);transform-origin:100% 50%;-webkit-text-stroke:0.1px #2e2e30;">$2,639,094</div>
<div class="t" style="right:595.30px;top:239.37px;font-size:9.6px;line-height:9.6px;color:#2f9573;font-weight:400;transform:scaleX(0.96);transform-origin:100% 50%;-webkit-text-stroke:0.22px #2f9573;">$649,553</div>
<div class="t" style="right:513.10px;top:239.37px;font-size:9.6px;line-height:9.6px;color:#2f9573;font-weight:400;transform:scaleX(0.96);transform-origin:100% 50%;-webkit-text-stroke:0.22px #2f9573;">$649,553</div>
<div class="t" style="right:430.90px;top:239.37px;font-size:9.6px;line-height:9.6px;color:#2f9573;font-weight:400;transform:scaleX(0.96);transform-origin:100% 50%;-webkit-text-stroke:0.22px #2f9573;">$649,553</div>
<div class="t" style="right:348.70px;top:239.37px;font-size:9.6px;line-height:9.6px;color:#2f9573;font-weight:400;transform:scaleX(0.96);transform-origin:100% 50%;-webkit-text-stroke:0.22px #2f9573;">$649,553</div>
<div class="t" style="right:266.50px;top:239.37px;font-size:9.6px;line-height:9.6px;color:#3a3a3d;font-weight:400;transform:scaleX(0.96);transform-origin:100% 50%;-webkit-text-stroke:0.22px #3a3a3d;">$649,553</div>
<div class="t" style="right:184.20px;top:239.37px;font-size:9.6px;line-height:9.6px;color:#3a3a3d;font-weight:400;transform:scaleX(0.96);transform-origin:100% 50%;-webkit-text-stroke:0.22px #3a3a3d;">$649,553</div>
<div class="t" style="right:102.00px;top:239.37px;font-size:9.6px;line-height:9.6px;color:#3a3a3d;font-weight:400;transform:scaleX(0.96);transform-origin:100% 50%;-webkit-text-stroke:0.22px #3a3a3d;">$649,553</div>
<div class="t" style="right:19.80px;top:239.37px;font-size:9.6px;line-height:9.6px;color:#3a3a3d;font-weight:400;transform:scaleX(0.96);transform-origin:100% 50%;-webkit-text-stroke:0.22px #3a3a3d;">$649,553</div>
<div class="t" style="right:595.30px;top:258.77px;font-size:9.6px;line-height:9.6px;color:#1d8a66;font-weight:700;transform:scaleX(0.975);transform-origin:100% 50%;-webkit-text-stroke:0.1px #1d8a66;">$1,003,302</div>
<div class="t" style="right:513.10px;top:258.77px;font-size:9.6px;line-height:9.6px;color:#1d8a66;font-weight:700;transform:scaleX(0.975);transform-origin:100% 50%;-webkit-text-stroke:0.1px #1d8a66;">$1,003,302</div>
<div class="t" style="right:430.90px;top:258.77px;font-size:9.6px;line-height:9.6px;color:#1d8a66;font-weight:700;transform:scaleX(0.975);transform-origin:100% 50%;-webkit-text-stroke:0.1px #1d8a66;">$1,003,302</div>
<div class="t" style="right:348.70px;top:258.77px;font-size:9.6px;line-height:9.6px;color:#1d8a66;font-weight:700;transform:scaleX(0.975);transform-origin:100% 50%;-webkit-text-stroke:0.1px #1d8a66;">$1,003,302</div>
<div class="t" style="right:266.50px;top:258.77px;font-size:9.6px;line-height:9.6px;color:#2e2e30;font-weight:700;transform:scaleX(0.975);transform-origin:100% 50%;-webkit-text-stroke:0.1px #2e2e30;">$1,003,302</div>
<div class="t" style="right:184.20px;top:258.77px;font-size:9.6px;line-height:9.6px;color:#2e2e30;font-weight:700;transform:scaleX(0.975);transform-origin:100% 50%;-webkit-text-stroke:0.1px #2e2e30;">$1,003,302</div>
<div class="t" style="right:102.00px;top:258.77px;font-size:9.6px;line-height:9.6px;color:#2e2e30;font-weight:700;transform:scaleX(0.975);transform-origin:100% 50%;-webkit-text-stroke:0.1px #2e2e30;">$1,003,302</div>
<div class="t" style="right:19.80px;top:258.77px;font-size:9.6px;line-height:9.6px;color:#2e2e30;font-weight:700;transform:scaleX(0.975);transform-origin:100% 50%;-webkit-text-stroke:0.1px #2e2e30;">$1,003,302</div>
</div>
<div class="t" style="left:23.10px;top:166.55px;font-size:8.8px;line-height:8.8px;color:#46464a;font-weight:400;-webkit-text-stroke:0.12px currentColor;">Revenue</div>
<div class="t" style="left:129.80px;top:166.51px;font-size:8.85px;line-height:8.85px;color:#46464a;font-weight:400;-webkit-text-stroke:0.12px currentColor;">Type: Subscriptions</div>
<div class="t" style="left:23.10px;top:185.95px;font-size:8.8px;line-height:8.8px;color:#46464a;font-weight:400;-webkit-text-stroke:0.12px currentColor;">Revenue</div>
<div class="t" style="left:129.80px;top:185.91px;font-size:8.85px;line-height:8.85px;color:#46464a;font-weight:400;-webkit-text-stroke:0.12px currentColor;">Type: Services</div>
<div class="t" style="left:23.10px;top:263.80px;font-size:8.5px;line-height:8.5px;color:#2a2a2c;font-weight:700;">Cost of Goods Sold</div>
<div class="t" style="left:23.10px;top:283.20px;font-size:8.5px;line-height:8.5px;color:#2a2a2c;font-weight:700;">Gross Profit</div>
<div class="t" style="left:23.10px;top:302.35px;font-size:8.8px;line-height:8.8px;color:#46464a;font-weight:400;-webkit-text-stroke:0.12px currentColor;">Operating Expense</div>
<div class="t" style="left:129.80px;top:302.31px;font-size:8.85px;line-height:8.85px;color:#46464a;font-weight:400;-webkit-text-stroke:0.12px currentColor;">Department: R&amp;D</div>
<div class="t" style="left:23.10px;top:321.75px;font-size:8.8px;line-height:8.8px;color:#46464a;font-weight:400;-webkit-text-stroke:0.12px currentColor;">Operating Expense</div>
<div class="t" style="left:129.80px;top:321.71px;font-size:8.85px;line-height:8.85px;color:#46464a;font-weight:400;-webkit-text-stroke:0.12px currentColor;">Department: G&amp;A</div>
<div class="t" style="left:23.10px;top:341.15px;font-size:8.8px;line-height:8.8px;color:#46464a;font-weight:400;-webkit-text-stroke:0.12px currentColor;">Operating Expense</div>
<div class="t" style="left:129.80px;top:341.11px;font-size:8.85px;line-height:8.85px;color:#46464a;font-weight:400;-webkit-text-stroke:0.12px currentColor;">Department: S&amp;M</div>
<div class="t" style="left:23.10px;top:360.80px;font-size:8.5px;line-height:8.5px;color:#2a2a2c;font-weight:700;">Operating Expense</div>
<div class="t" style="left:23.10px;top:380.20px;font-size:8.5px;line-height:8.5px;color:#2a2a2c;font-weight:700;">Operating Income</div>
<div class="t" style="left:23.10px;top:399.35px;font-size:8.8px;line-height:8.8px;color:#58585b;font-weight:400;-webkit-text-stroke:0.12px currentColor;">Other Expense</div>
<div class="t" style="left:23.10px;top:419.00px;font-size:8.5px;line-height:8.5px;color:#2a2a2c;font-weight:700;">Net Income</div>
<div class="t" style="left:22.90px;top:439.18px;font-size:7.7px;line-height:7.7px;color:#505052;font-weight:400;letter-spacing:0.9px;">EB</div>
<div class="r" style="left:18.00px;top:199.00px;width:822.00px;height:2.00px;background:#b8b6b9;"></div>
<div class="r" style="left:18.00px;top:257.00px;width:822.00px;height:2.00px;background:#b8b6b9;"></div>
<div class="r" style="left:18.00px;top:276.00px;width:822.00px;height:2.00px;background:#b8b6b9;"></div>
<div class="r" style="left:18.00px;top:354.00px;width:822.00px;height:2.00px;background:#b8b6b9;"></div>
<div class="r" style="left:18.00px;top:373.00px;width:822.00px;height:2.00px;background:#b8b6b9;"></div>
<div class="r" style="left:18.00px;top:412.00px;width:822.00px;height:2.00px;background:#b8b6b9;"></div>
<div class="r" style="left:18.00px;top:160.70px;width:2.40px;height:270.60px;background:#c4e7db;"></div>
<div class="r" style="left:234.80px;top:127.00px;width:1.00px;height:444.00px;background:#e6e6e8;"></div>
<div class="r" style="left:235.80px;top:160.70px;width:1.60px;height:410.30px;background:linear-gradient(90deg,rgba(0,0,0,0.03),rgba(0,0,0,0));"></div>
<div class="r" style="left:17.30px;top:199.90px;width:107.80px;height:19.80px;border:1.8px solid #2b2b2d;box-sizing:border-box;background:#f7f7f7;"></div>
<div class="t" style="left:23.10px;top:205.83px;font-size:8.35px;line-height:8.35px;color:#2a2a2c;font-weight:700;">Revenue</div>
<div class="r" style="left:58.10px;top:204.40px;width:0.70px;height:9.60px;background:#444;"></div>
<div class="r" style="left:123.30px;top:217.80px;width:3.00px;height:3.00px;background:#1a1a1a;border-radius:0.5px;"></div>
<div class="r" style="left:18.90px;top:222.90px;width:192.20px;height:43.20px;background:#fff;border-radius:3px;box-shadow:0 1px 4px rgba(0,0,0,0.13),0 0 1px rgba(0,0,0,0.12);overflow:hidden;"></div>
<div class="r" style="left:18.90px;top:222.90px;width:192.20px;height:21.00px;background:#f0f0f1;border-radius:3px 3px 0 0;"></div>
<div class="t" style="left:23.10px;top:229.33px;font-size:8.35px;line-height:8.35px;color:#2a2a2c;font-weight:700;">Revenue</div>
<div class="t" style="left:23.10px;top:250.51px;font-size:8.73px;line-height:8.73px;color:#48484b;font-weight:400;-webkit-text-stroke:0.1px #48484b;">Revenue Growth</div>
</div></body></html>
